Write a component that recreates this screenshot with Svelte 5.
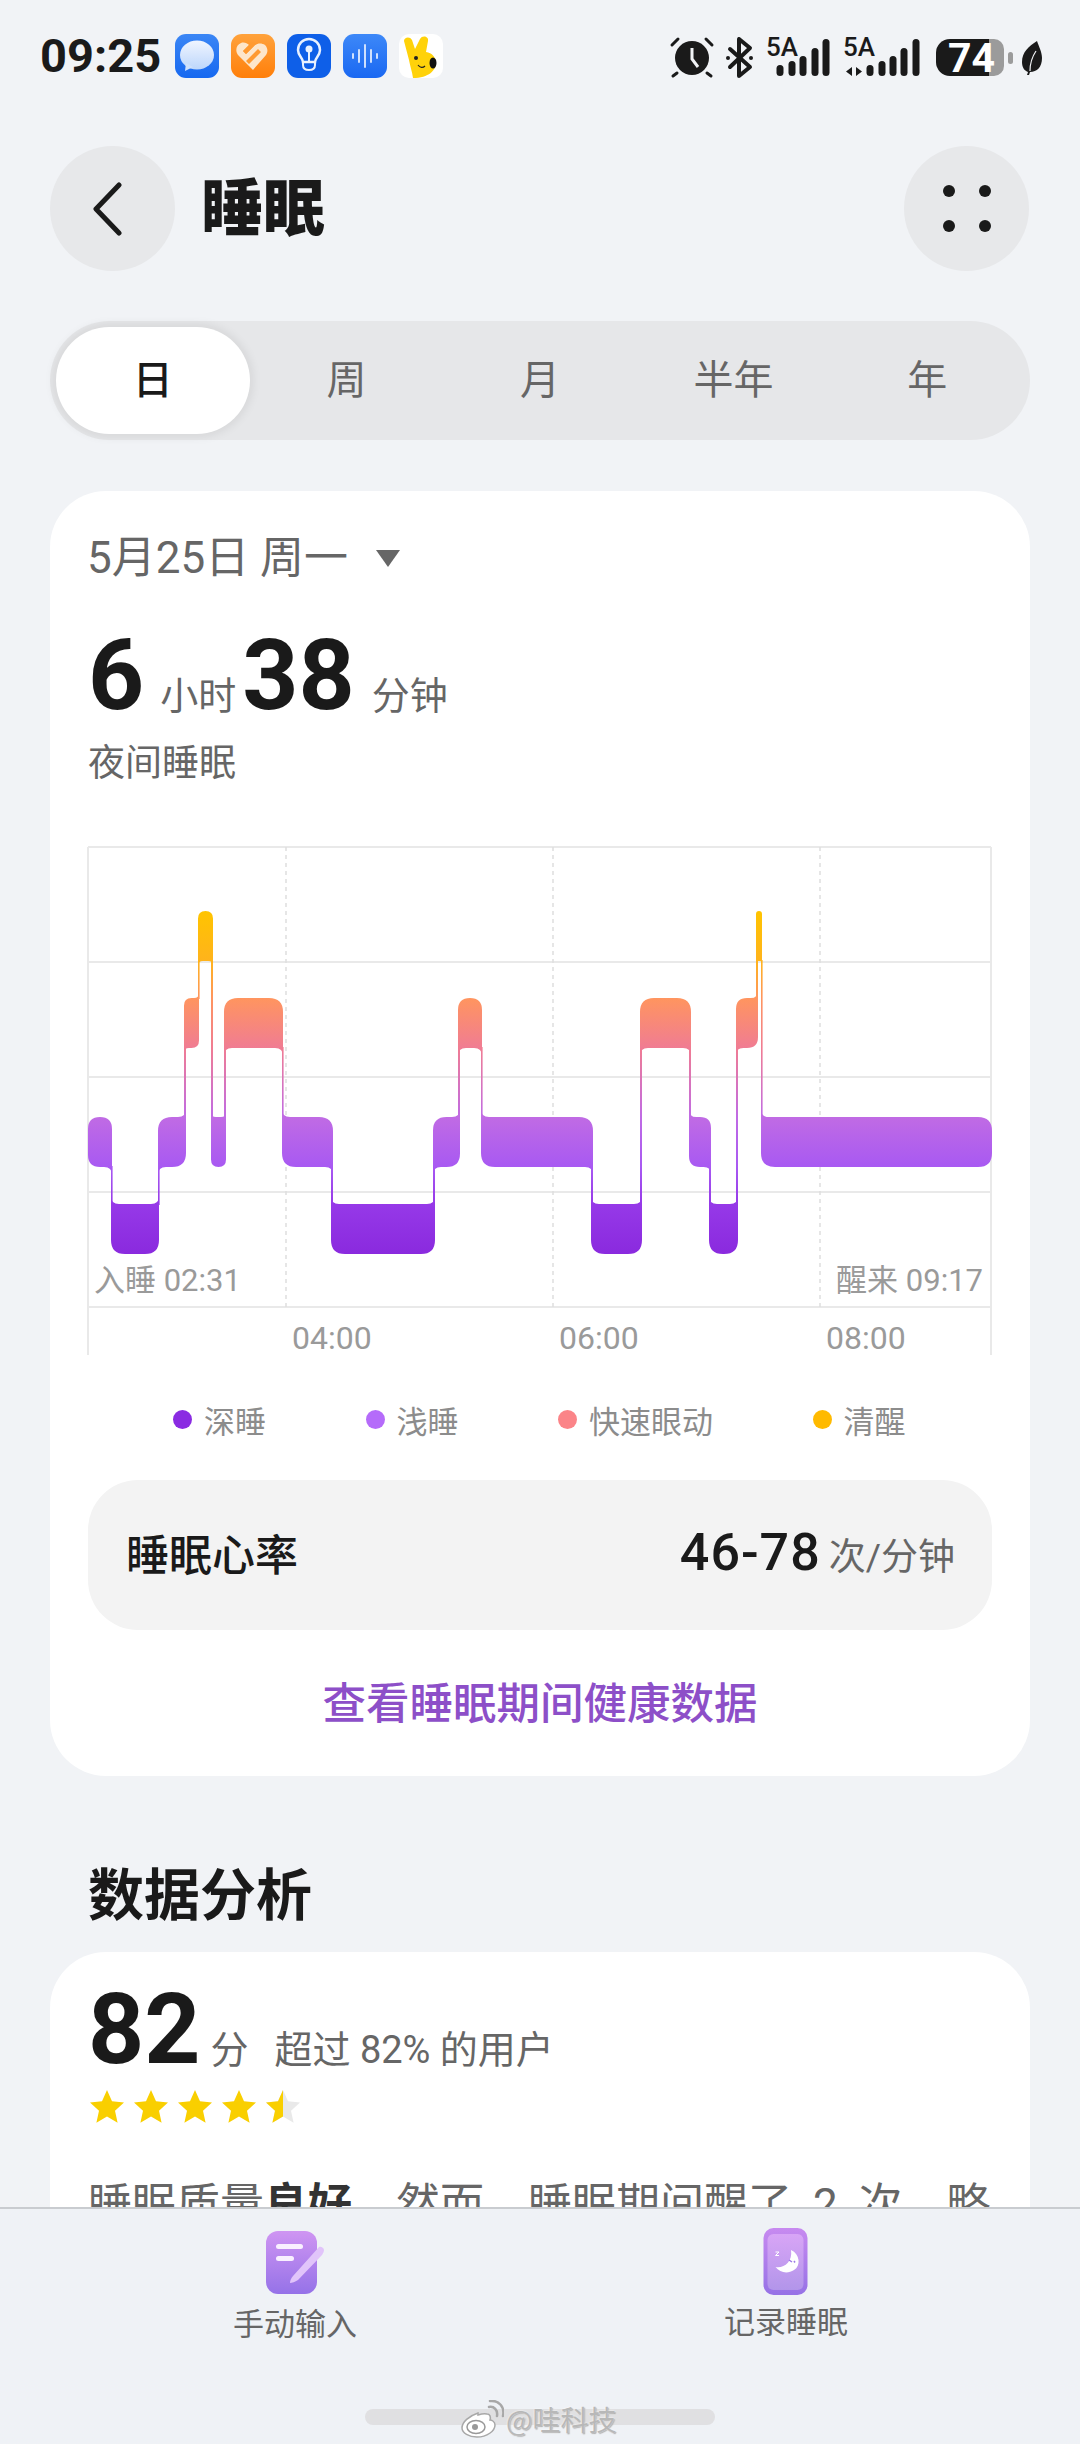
<script>
  const LV = {
    awake: [910, 960],
    rem: [997, 1047],
    light: [1116, 1166],
    deep: [1203, 1253]
  };
  const segs = [
    ['light', 88, 112], ['deep', 111, 159], ['light', 158, 186], ['rem', 184, 199],
    ['awake', 198, 213], ['light', 211, 226], ['rem', 224, 283], ['light', 282, 333],
    ['deep', 331, 435], ['light', 433, 460], ['rem', 458, 482], ['light', 481, 593],
    ['deep', 591, 642], ['rem', 640, 691], ['light', 689, 711], ['deep', 709, 738],
    ['rem', 736, 758], ['awake', 756, 762], ['light', 761, 992]
  ];
  const rank = { awake: 0, rem: 1, light: 2, deep: 3 };

  function blockPath(i) {
    const [lv, x0, x1] = segs[i];
    const [y0, y1] = LV[lv];
    const w = x1 - x0;
    const r = Math.min(14, w / 2);
    const f = Math.min(8, w / 3);
    const prev = segs[i - 1];
    const next = segs[i + 1];
    const tl = prev && rank[prev[0]] < rank[lv];
    const bl = prev && rank[prev[0]] > rank[lv];
    const tr = next && rank[next[0]] < rank[lv];
    const br = next && rank[next[0]] > rank[lv];
    let d = tl
      ? `M${x0} ${y0 - f}Q${x0} ${y0} ${x0 + f} ${y0}`
      : `M${x0} ${y0 + r}Q${x0} ${y0} ${x0 + r} ${y0}`;
    d += tr
      ? `L${x1 - f} ${y0}Q${x1} ${y0} ${x1} ${y0 - f}`
      : `L${x1 - r} ${y0}Q${x1} ${y0} ${x1} ${y0 + r}`;
    d += br
      ? `L${x1} ${y1 + f}Q${x1} ${y1} ${x1 - f} ${y1}`
      : `L${x1} ${y1 - r}Q${x1} ${y1} ${x1 - r} ${y1}`;
    d += bl
      ? `L${x0 + f} ${y1}Q${x0} ${y1} ${x0} ${y1 + f}`
      : `L${x0 + r} ${y1}Q${x0} ${y1} ${x0} ${y1 - r}`;
    return d + 'Z';
  }

  const blocks = segs.map((_, i) => blockPath(i));
  const links = segs.slice(1).map((s, i) => {
    const a = segs[i];
    const top = rank[a[0]] < rank[s[0]] ? LV[a[0]][1] : LV[s[0]][1];
    const bottom = rank[a[0]] < rank[s[0]] ? LV[s[0]][0] : LV[a[0]][0];
    return { x: s[1], w: Math.max(a[2] - s[1], 1.6), y: top - 1, h: bottom - top + 2 };
  });

  const hGrid = [846, 961, 1076, 1191, 1306];
  const dashes = [286, 553, 820];
  const ticks = [
    { x: 292, t: '04:00' },
    { x: 559, t: '06:00' },
    { x: 826, t: '08:00' }
  ];
  const tabs = ['日', '周', '月', '半年', '年'];
  const legend = [
    { c: '#8a2be2', t: '深睡' },
    { c: '#b56bfa', t: '浅睡' },
    { c: '#fb8488', t: '快速眼动' },
    { c: '#ffba00', t: '清醒' }
  ];
  const star = 'M17 0l5 11.2 12 1.3-9 8.2 2.6 12L17 26.600l-10.600 6.100L9 20.700 0 12.500l12-1.300z';
  const bars1 = [[780, 64], [792, 60], [803, 55], [815, 47], [826, 38]];
  const bars2 = [[870, 64], [882, 60], [893, 55], [904, 47], [916, 38]];
</script>

<div class="page">
  <header class="status">
    <span class="time">09:25</span>
    <div class="apps">
      <svg class="app" viewBox="0 0 44 44">
        <defs>
          <linearGradient id="msgbg" x1="0" y1="0" x2="0" y2="1"><stop offset="0" stop-color="#3b86f5" /><stop offset="1" stop-color="#1668f0" /></linearGradient>
          <linearGradient id="msgf" x1="0" y1="0" x2="0" y2="1"><stop offset="0" stop-color="#f0f5ff" /><stop offset="1" stop-color="#bcd6fb" /></linearGradient>
          <linearGradient id="hbg" x1="0" y1="0" x2="0" y2="1"><stop offset="0" stop-color="#ffa23c" /><stop offset="1" stop-color="#ff7f0a" /></linearGradient>
          <linearGradient id="vbg" x1="0" y1="0" x2="0" y2="1"><stop offset="0" stop-color="#3d88f8" /><stop offset="1" stop-color="#1a68f2" /></linearGradient>
        </defs>
        <rect width="44" height="44" rx="11" fill="url(#msgbg)" />
        <ellipse cx="22" cy="21" rx="17" ry="14.500" fill="url(#msgf)" />
        <path d="M11 29l-1 8 8-4z" fill="#cfe1fb" />
      </svg>
      <svg class="app" viewBox="0 0 44 44">
        <rect width="44" height="44" rx="11" fill="url(#hbg)" />
        <path d="M22 36L7 21c-3-4-2-10 3-12 3-1 6 0 8 2l-6 6 3 3 9-9c3-2 7-2 10 0 3 3 3 7 1 10z" fill="#fde6ca" />
        <path d="M18 11l-6 6 3 3 9-9 2-1-5-2zM15 27l12-12 3 3-12 12z" fill="#ff9a30" />
      </svg>
      <svg class="app" viewBox="0 0 44 44">
        <rect width="44" height="44" rx="11" fill="#0e5fe8" />
        <path d="M16 28c0-4-5-6-5-12a11 11 0 0 1 22 0c0 6-5 8-5 12z" fill="none" stroke="#e8f1ff" stroke-width="2.500" />
        <path d="M16 28h12v3c0 3-2 5-6 5s-6-2-6-5z" fill="none" stroke="#e8f1ff" stroke-width="2" />
        <circle cx="22" cy="15" r="3.500" fill="#e8f1ff" />
        <path d="M22 17v10" stroke="#e8f1ff" stroke-width="2" />
      </svg>
      <svg class="app" viewBox="0 0 44 44">
        <rect width="44" height="44" rx="11" fill="url(#vbg)" />
        <path d="M10 20v4M16 16v12M22 11v22M28 16v12M34 20v4" stroke="#cfe0fd" stroke-width="2" stroke-linecap="round" />
      </svg>
      <svg class="app" viewBox="0 0 44 44">
        <rect width="44" height="44" rx="10" fill="#fff" />
        <path d="M5 7c0-4 6-5 8-1l3 9 5-10c2-4 9-3 8 2l-2 11c6 1 10 5 10 11 0 7-7 15-23 15-1-7-3-12-4-18z" fill="#ffd20a" />
        <ellipse cx="34" cy="29" rx="3.500" ry="5.500" fill="#111" />
        <circle cx="17" cy="24" r="2" fill="#222" />
        <path d="M19 31c2 3 5 3 7 1" stroke="#222" stroke-width="1.200" fill="none" />
      </svg>
    </div>
    <svg class="sys" viewBox="665 30 385 50">
      <g fill="#1a1a1a">
        <circle cx="692" cy="57" r="17" />
        <path d="M692 47v11l6 8" stroke="#f1f3f6" stroke-width="3" fill="none" />
        <path d="M672 44l6-6M712 44l-6-6M677 72l-4 3M707 72l4 3" stroke="#1a1a1a" stroke-width="3" stroke-linecap="round" />
        <path d="M739 38v37l11-9-20-18M739 38l11 9-20 19" stroke="#1a1a1a" stroke-width="4" fill="none" stroke-linejoin="round" stroke-linecap="round" />
        <circle cx="728" cy="57" r="2" />
        <circle cx="751" cy="57" r="2" />
        {#each bars1 as b}
          <rect x={b[0] - 3.500} y={b[1]} width="7" height={75 - b[1]} rx="3.500" />
        {/each}
        {#each bars2 as b}
          <rect x={b[0] - 3.500} y={b[1]} width="7" height={75 - b[1]} rx="3.500" />
        {/each}
        <path d="M846 70.500l6-4.500v9zM856 66l6 4.500-6 4.500z" />
        <text x="766" y="55" class="net">5A</text>
        <text x="843" y="55" class="net">5A</text>
        <path d="M950 38h39v37h-39a14 14 0 0 1-14-14v-9a14 14 0 0 1 14-14z" />
        <path d="M989 38h5a10 10 0 0 1 10 10v17a10 10 0 0 1-10 10h-5z" fill="#9b9b9b" />
        <rect x="1008" y="51" width="5" height="12" rx="2.500" fill="#9b9b9b" />
        <text x="948" y="71" class="bat">74</text>
        <path d="M1037 40c-8 5-15 11-15 21 0 6 3 9 6 10l-1 3 2 0 1-3c7 0 12-5 12-14 0-6-3-11-5-17z" />
        <path d="M1030 70c0-8 2-14 6-20" stroke="#f1f3f6" stroke-width="1.200" fill="none" />
      </g>
    </svg>
  </header>

  <div class="topbar">
    <button class="round" aria-label="返回">
      <svg class="chev" width="30" height="54" viewBox="0 0 30 54"><path d="M27 3L4 27l23 24" fill="none" stroke="#1a1a1a" stroke-width="5" stroke-linecap="round" stroke-linejoin="round" /></svg>
    </button>
    <h1>睡眠</h1>
    <button class="round" aria-label="更多">
      <svg width="48" height="47" viewBox="0 0 48 47" fill="#1a1a1a">
        <circle cx="6" cy="6" r="6" /><circle cx="42" cy="6" r="6" />
        <circle cx="6" cy="41" r="6" /><circle cx="42" cy="41" r="6" />
      </svg>
    </button>
  </div>

  <div class="tabs">
    {#each tabs as t, i}
      <div class="tab" class:on={i === 0}>{t}</div>
    {/each}
  </div>

  <section class="card main">
    <div class="date">5月25日 周一<span class="caret"></span></div>
    <div class="dur">
      <b>6</b><span class="u1">小时</span><b>38</b><span class="u2">分钟</span>
    </div>
    <div class="sub">夜间睡眠</div>

    <svg class="chart" viewBox="86 844 908 514" width="908" height="514">
      <defs>
        <linearGradient id="sleep" gradientUnits="userSpaceOnUse" x1="0" y1="910" x2="0" y2="1253">
          <stop offset="0" stop-color="#ffc400" />
          <stop offset="0.146" stop-color="#ffb31c" />
          <stop offset="0.254" stop-color="#ff955f" />
          <stop offset="0.4" stop-color="#f07c93" />
          <stop offset="0.6" stop-color="#c06be4" />
          <stop offset="0.746" stop-color="#a859f2" />
          <stop offset="0.854" stop-color="#9639e8" />
          <stop offset="1" stop-color="#8a2ade" />
        </linearGradient>
      </defs>
      {#each hGrid as y}
        <line x1="88" x2="991" y1={y} y2={y} class="g" />
      {/each}
      <line x1="88" x2="88" y1="846" y2="1354" class="g" />
      <line x1="991" x2="991" y1="846" y2="1354" class="g" />
      {#each dashes as x}
        <line x1={x} x2={x} y1="846" y2="1306" class="d" />
      {/each}
      {#each links as l}
        <rect x={l.x} y={l.y} width={l.w} height={l.h} fill="url(#sleep)" />
      {/each}
      {#each blocks as d}
        <path {d} fill="url(#sleep)" />
      {/each}
      <text x="94" y="1290" class="ax"><tspan class="cjk">入睡</tspan> 02:31</text>
      <text x="983" y="1290" class="ax" text-anchor="end"><tspan class="cjk">醒来</tspan> 09:17</text>
      {#each ticks as t}
        <text x={t.x} y="1348" class="ax tick">{t.t}</text>
      {/each}
    </svg>

    <div class="legend">
      {#each legend as l}
        <div class="leg"><span class="dot" style="background:{l.c}"></span>{l.t}</div>
      {/each}
    </div>

    <div class="hr">
      <span class="hr-l">睡眠心率</span>
      <span class="hr-r"><b>46-78</b><span class="per">次/分钟</span></span>
    </div>
    <div class="link">查看睡眠期间健康数据</div>
  </section>

  <h2>数据分析</h2>

  <section class="card score">
    <div class="sc-top"><b>82</b><span class="fen">分</span><span class="beat">超过 82% 的用户</span></div>
    <div class="stars">
      {#each [0, 1, 2, 3] as s}
        <svg width="34" height="33" viewBox="0 0 34 33"><path d={star} fill="#f9cf00" /></svg>
      {/each}
      <svg width="34" height="33" viewBox="0 0 34 33">
        <path d={star} fill="#e9e9e9" />
        <path d="M17 0v26.600l-10.600 6.100L9 20.700 0 12.500l12-1.300z" fill="#f9cf00" />
      </svg>
    </div>
    <p>睡眠质量<b>良好</b>，然而，睡眠期间醒了 2 次，略</p>
  </section>

  <footer class="bottom">
    <div class="act a1">
      <svg width="60" height="64" viewBox="0 0 60 64">
        <defs>
          <linearGradient id="n1" x1="0" y1="0" x2="0" y2="1"><stop offset="0" stop-color="#cf95f2" /><stop offset="1" stop-color="#9572e8" /></linearGradient>
          <linearGradient id="n0" x1="0" y1="0" x2="0" y2="1"><stop offset="0" stop-color="#c78af0" /><stop offset="1" stop-color="#9672e6" /></linearGradient>
          <linearGradient id="n2" x1="0" y1="0" x2="0" y2="1"><stop offset="0" stop-color="#d8a5f6" /><stop offset="1" stop-color="#b295ea" /></linearGradient>
        </defs>
        <rect x="1" y="0" width="51" height="63" rx="12" fill="url(#n1)" />
        <rect x="11" y="13" width="27" height="5" rx="2.500" fill="#f9f0ff" />
        <rect x="11" y="25" width="18" height="5" rx="2.500" fill="#f9f0ff" />
        <path d="M54 16c2-1 5 1 5 3 0 2-1 3-2 5L33 49c-3 2-6 3-8 3 0-2 1-5 3-7z" fill="#e1c4fa" />
      </svg>
      <span>手动输入</span>
    </div>
    <div class="act a2">
      <svg width="46" height="68" viewBox="0 0 46 68">
        <rect x="0.500" y="0" width="44" height="67" rx="10" fill="url(#n0)" />
        <rect x="4.500" y="6" width="36" height="56" rx="6" fill="url(#n2)" />
        <path d="M28 22C37 26 38 38 31 42 25 46 17 45 12.500 39 20 41 30 34 28 22Z" fill="#fff" />
        <path d="M12.500 24h3.500l-3.500 3.500h3.500" stroke="#fff" stroke-width="1" fill="none" />
        <path d="M26 32l3 2M31 33l1 1.500" stroke="#9d78e6" stroke-width="1.500" />
      </svg>
      <span>记录睡眠</span>
    </div>
    <div class="home"></div>
    <div class="wm">
      <svg width="44" height="38" viewBox="0 0 44 38">
        <path d="M18 13c-9 3-16 9-16 15 0 5 7 9 15 9 10 0 18-6 18-12 0-4-4-5-5-5 1-3 0-6-3-6-3-1-6 0-9 1z" fill="#fff" stroke="#a8a8a8" stroke-width="1.500" />
        <ellipse cx="16" cy="27" rx="9" ry="6.500" fill="#fff" stroke="#999" stroke-width="1.500" />
        <circle cx="15" cy="27" r="3" fill="#999" />
        <path d="M29 7c5-1 9 3 8 9M30 1c9-1 15 6 13 15" stroke="#a8a8a8" stroke-width="2.500" fill="none" stroke-linecap="round" />
      </svg>
      <span>@哇科技</span>
    </div>
  </footer>
</div>

<style>
  :global(body) {
    margin: 0;
    background: #f1f3f6;
  }
  .page {
    position: relative;
    width: 1080px;
    height: 2444px;
    overflow: hidden;
    background: #f1f3f6;
    font-family: Roboto, "Noto Sans CJK SC", sans-serif;
    color: #1a1a1a;
  }
  .status {
    display: flex;
    align-items: center;
    height: 50px;
    padding: 31px 30px 0 40px;
  }
  .time {
    font-family: Roboto, sans-serif;
    font-size: 47px;
    font-weight: 700;
    width: 120px;
    line-height: 50px;
  }
  .apps {
    display: flex;
    gap: 12px;
    margin-left: 15px;
  }
  .app {
    width: 44px;
    height: 44px;
    display: block;
  }
  .sys {
    width: 385px;
    height: 50px;
    margin-left: auto;
  }
  .net {
    font: 500 26px Roboto, sans-serif;
  }
  .bat {
    font: 700 41px Roboto, sans-serif;
    fill: #fff;
  }
  .topbar {
    display: flex;
    align-items: center;
    height: 125px;
    margin-top: 65px;
    padding: 0 51px 0 50px;
  }
  .round {
    width: 125px;
    height: 125px;
    border: 0;
    padding: 0;
    border-radius: 50%;
    background: #e7e8ea;
    display: flex;
    align-items: center;
    justify-content: center;
    flex: none;
  }
  .chev {
    margin-right: 12px;
  }
  h1 {
    margin: 0 0 0 26px;
    padding-bottom: 10px;
    font: 900 62px "Noto Sans CJK SC", sans-serif;
    flex: 1;
  }
  .tabs {
    display: grid;
    grid-template-columns: repeat(5, 1fr);
    margin: 50px 50px 0;
    height: 119px;
    padding: 6px;
    box-sizing: border-box;
    background: #e6e7e9;
    border-radius: 60px;
  }
  .tab {
    display: flex;
    align-items: center;
    justify-content: center;
    padding-bottom: 7px;
    box-sizing: border-box;
    font: 400 40px "Noto Sans CJK SC", sans-serif;
    color: #666;
    border-radius: 54px;
  }
  .tab.on {
    background: #fff;
    color: #1a1a1a;
    font-weight: 500;
    box-shadow: 0 0 10px 3px rgba(0, 0, 0, 0.07);
  }
  .card {
    background: #fff;
    border-radius: 56px;
    margin: 0 50px;
    box-sizing: border-box;
  }
  .main {
    margin-top: 51px;
    height: 1285px;
    padding: 0 38px;
  }
  .date {
    padding-top: 39px;
    margin-left: -1px;
    font: 400 44px/56px Roboto, "Noto Sans CJK SC", sans-serif;
    color: #666;
    display: flex;
    align-items: center;
    white-space: pre;
  }
  .caret {
    width: 0;
    height: 0;
    margin-left: 28px;
    margin-top: 0;
    border-left: 12px solid transparent;
    border-right: 12px solid transparent;
    border-top: 17px solid #666;
  }
  .dur {
    display: flex;
    align-items: baseline;
    height: 96px;
    margin-top: 42px;
  }
  .dur b {
    font: 700 98px/96px Roboto, sans-serif;
  }
  .dur span {
    font: 400 38px "Noto Sans CJK SC", sans-serif;
    color: #666;
  }
  .u1 {
    margin: 0 6px 0 16px;
  }
  .u2 {
    margin-left: 17px;
  }
  .sub {
    margin-top: 10px;
    font: 400 37px/52px "Noto Sans CJK SC", sans-serif;
    color: #666;
  }
  .chart {
    display: block;
    margin: 59px 0 0 -2px;
  }
  .g {
    stroke: #e9e9e9;
    stroke-width: 2;
  }
  .d {
    stroke: #dedede;
    stroke-width: 1.500;
    stroke-dasharray: 4 4;
  }
  .ax {
    font-family: Roboto, "Noto Sans CJK SC", sans-serif;
    font-size: 31px;
    fill: #9a9a9a;
  }
  .cjk {
    font-family: "Noto Sans CJK SC", sans-serif;
  }
  .tick {
    font-size: 32px;
  }
  .legend {
    display: flex;
    gap: 99.500px;
    margin: 35px 0 0 85px;
    height: 50px;
  }
  .leg {
    display: flex;
    align-items: center;
    gap: 12px;
    font: 400 31px "Noto Sans CJK SC", sans-serif;
    color: #8c8c8c;
    white-space: nowrap;
  }
  .dot {
    width: 19px;
    height: 19px;
    border-radius: 50%;
    flex: none;
  }
  .hr {
    display: flex;
    align-items: center;
    justify-content: space-between;
    height: 150px;
    margin-top: 36px;
    padding: 0 37px 6px 38px;
    box-sizing: border-box;
    border-radius: 50px;
    background: #f3f3f3;
  }
  .hr-l {
    font: 500 43px "Noto Sans CJK SC", sans-serif;
  }
  .hr-r {
    display: flex;
    align-items: baseline;
  }
  .hr-r b {
    font: 500 52px Roboto, sans-serif;
    letter-spacing: 1px;
    color: #1a1a1a;
  }
  .per {
    margin-left: 8px;
    font: 400 37px Roboto, "Noto Sans CJK SC", sans-serif;
    color: #666;
  }
  .link {
    margin-top: 40px;
    text-align: center;
    font: 500 43.500px/62px "Noto Sans CJK SC", sans-serif;
    color: #8d4fc8;
  }
  h2 {
    margin: 76px 0 0 88px;
    font: 700 56px/78px "Noto Sans CJK SC", sans-serif;
  }
  .score {
    margin-top: 22px;
    height: 500px;
    padding: 0 38px;
    overflow: hidden;
  }
  .sc-top {
    display: flex;
    align-items: baseline;
    padding-top: 30px;
    height: 96px;
  }
  .sc-top b {
    font: 700 98px/96px Roboto, sans-serif;
  }
  .fen {
    font: 400 38px "Noto Sans CJK SC", sans-serif;
    color: #666;
    margin-left: 10px;
  }
  .beat {
    font: 400 38px Roboto, "Noto Sans CJK SC", sans-serif;
    color: #666;
    margin-left: 26px;
  }
  .stars {
    display: flex;
    gap: 10px;
    margin: 12px 0 0 2px;
  }
  .stars svg {
    display: block;
  }
  p {
    margin: 51px 0 0;
    font: 400 44px/62px Roboto, "Noto Sans CJK SC", sans-serif;
    word-spacing: 10px;
    color: #666;
    white-space: nowrap;
  }
  p b {
    font-weight: 700;
    color: #333;
  }
  .bottom {
    position: absolute;
    left: 0;
    right: 0;
    bottom: 0;
    height: 237px;
    box-sizing: border-box;
    border-top: 2px solid #c9ccd0;
    background: #eff2f6;
    display: grid;
    grid-template-columns: 590px 1fr;
  }
  .act {
    display: flex;
    flex-direction: column;
    align-items: center;
    font: 400 31px/42px "Noto Sans CJK SC", sans-serif;
    color: #666;
  }
  .a1 {
    padding: 22px 0 0 0;
  }
  .a1 svg {
    margin: 0 0 6px 0;
  }
  .a2 {
    padding: 19px 0 0;
    margin-left: -98px;
  }
  .a2 svg {
    margin: 0 0 3px 0;
  }
  .home {
    position: absolute;
    left: 365px;
    top: 200px;
    width: 350px;
    height: 16px;
    border-radius: 8px;
    background: #e0e0e2;
  }
  .wm {
    position: absolute;
    left: 460px;
    top: 190px;
    display: flex;
    align-items: center;
    gap: 2px;
    font: 400 28px "Noto Sans CJK SC", sans-serif;
    color: #b8b8b8;
    text-shadow: 0 0 2px #fff, 1px 1px 1px #a0a0a0;
  }
</style>
